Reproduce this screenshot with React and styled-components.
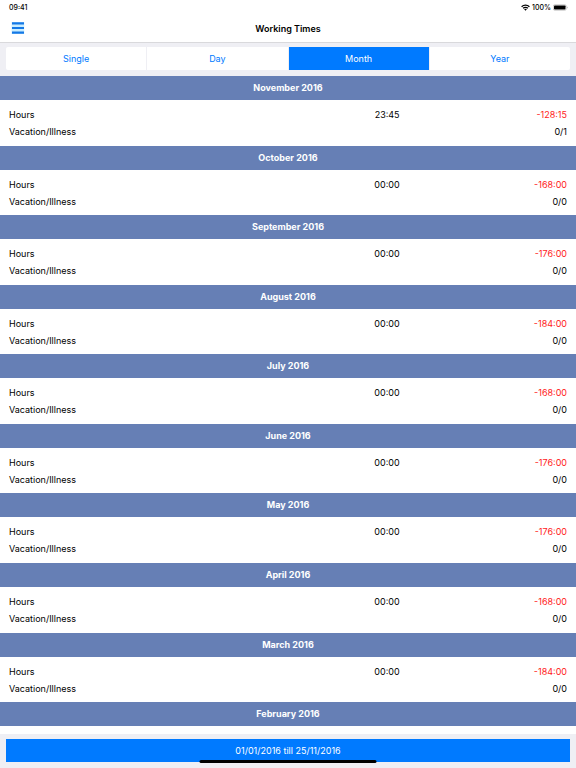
import React, { useState } from "react";
import styled, { createGlobalStyle } from "styled-components";

const tabs = ["Single", "Day", "Month", "Year"];

const months = [
  { title: "November 2016", hours: "23:45", balance: "-128:15", absence: "0/1" },
  { title: "October 2016", hours: "00:00", balance: "-168:00", absence: "0/0" },
  { title: "September 2016", hours: "00:00", balance: "-176:00", absence: "0/0" },
  { title: "August 2016", hours: "00:00", balance: "-184:00", absence: "0/0" },
  { title: "July 2016", hours: "00:00", balance: "-168:00", absence: "0/0" },
  { title: "June 2016", hours: "00:00", balance: "-176:00", absence: "0/0" },
  { title: "May 2016", hours: "00:00", balance: "-176:00", absence: "0/0" },
  { title: "April 2016", hours: "00:00", balance: "-168:00", absence: "0/0" },
  { title: "March 2016", hours: "00:00", balance: "-184:00", absence: "0/0" },
];

const WifiIcon = () => (
  <svg width="9" height="7" viewBox="0 0 18 14" aria-hidden="true">
    <g fill="none" stroke="#000" strokeWidth="2.6">
      <path d="M1.2 5.4a11 11 0 0 1 15.6 0" />
      <path d="M4.3 8.6a6.6 6.6 0 0 1 9.4 0" />
    </g>
    <path d="M9 13.6l-2.8-2.9a4 4 0 0 1 5.6 0z" />
  </svg>
);

const BatteryIcon = () => (
  <svg width="15" height="7" viewBox="0 0 30 14" aria-hidden="true">
    <rect x="0.5" y="1.5" width="26" height="11" rx="3" fill="none" stroke="#999" />
    <rect x="2" y="3" width="23" height="8" rx="1.5" />
    <path d="M28 5v4c1.6-.6 1.6-3.4 0-4z" fill="#999" />
  </svg>
);

const MenuIcon = () => (
  <svg width="14" height="14" viewBox="0 0 14 14" aria-hidden="true">
    <path fill="#c9edff" d="M.6 1h12.6v12H.6z" />
    <path fill="#1478e6" d="M1 1.2h12v2.2H1zM1 5.9h12v2.2H1zM1 10.5h12v2.2H1z" />
  </svg>
);

const Month = ({ title, hours, balance, absence }) => (
  <Section>
    <MonthTitle>{title}</MonthTitle>
    <Table>
      <tbody>
        <tr>
          <Label scope="row">Hours</Label>
          <Value>{hours}</Value>
          <Value $negative>{balance}</Value>
        </tr>
        <tr>
          <Label scope="row">Vacation/Illness</Label>
          <Value />
          <Value>{absence}</Value>
        </tr>
      </tbody>
    </Table>
  </Section>
);

const App = () => {
  const [active, setActive] = useState("Month");

  return (
    <Screen>
      <GlobalStyle />
      <StatusBar>
        <span>09:41</span>
        <Status>
          <WifiIcon />
          <span>100%</span>
          <BatteryIcon />
        </Status>
      </StatusBar>
      <NavBar>
        <MenuButton type="button" aria-label="Menu">
          <MenuIcon />
        </MenuButton>
        <Title>Working Times</Title>
      </NavBar>
      <TabBar>
        <Tabs>
          {tabs.map((tab) => (
            <Tab
              key={tab}
              type="button"
              aria-pressed={tab === active}
              $active={tab === active}
              onClick={() => setActive(tab)}
            >
              {tab}
            </Tab>
          ))}
        </Tabs>
      </TabBar>
      <List>
        {months.map((month) => (
          <Month key={month.title} {...month} />
        ))}
        <LastSection>
          <MonthTitle>February 2016</MonthTitle>
        </LastSection>
      </List>
      <Footer>
        <RangeButton type="button">01/01/2016 till 25/11/2016</RangeButton>
        <HomeIndicator />
      </Footer>
    </Screen>
  );
};

export default App;

const GlobalStyle = createGlobalStyle`
  * {
    box-sizing: border-box;
  }

  body {
    margin: 0;
    background: #fff;
    color: #000;
    font-family: Inter, "Liberation Sans", sans-serif;
    font-size: 9px;
  }

  button {
    margin: 0;
    padding: 0;
    border: 0;
    font: inherit;
    cursor: pointer;
  }
`;

const Screen = styled.div`
  display: flex;
  flex-direction: column;
  min-height: 100vh;
`;

const StatusBar = styled.div`
  display: flex;
  justify-content: space-between;
  align-items: center;
  height: 14px;
  padding: 0 8px 0 9px;
  font-size: 7px;
  font-weight: 500;
`;

const Status = styled.div`
  display: flex;
  align-items: center;
  gap: 2px;
`;

const NavBar = styled.header`
  display: grid;
  grid-template-columns: 1fr auto 1fr;
  align-items: center;
  height: 29px;
  padding: 0 11px;
  border-bottom: 1px solid #d9d9dc;
`;

const MenuButton = styled.button`
  display: flex;
  justify-self: start;
  background: none;
`;

const Title = styled.h1`
  margin: 0;
  font-size: 9px;
  font-weight: 600;
`;

const TabBar = styled.div`
  padding: 4px 6px 6px;
  background: #efeff4;
`;

const Tabs = styled.div`
  display: grid;
  grid-template-columns: repeat(4, 1fr);
  gap: 1px;
  border-radius: 2px;
  overflow: hidden;
`;

const Tab = styled.button`
  height: 23px;
  background: ${({ $active }) => ($active ? "#007aff" : "#fff")};
  color: ${({ $active }) => ($active ? "#fff" : "#007aff")};
`;

const List = styled.main`
  display: flex;
  flex: 1;
  flex-direction: column;
`;

const Section = styled.section`
  flex: 1;
`;

const LastSection = styled.section`
  flex: 0 0 32px;
`;

const MonthTitle = styled.h2`
  margin: 0;
  background: #667fb5;
  color: #fff;
  font-size: 9px;
  font-weight: 700;
  line-height: 24px;
  text-align: center;
`;

const Table = styled.table`
  width: 100%;
  padding: 6px 9px 5px;
  border-spacing: 0;
  table-layout: fixed;
  line-height: 17px;
`;

const Label = styled.th`
  width: 35%;
  padding: 0;
  font-weight: 400;
  text-align: left;
`;

const Value = styled.td`
  width: 35%;
  padding: 0;
  color: ${({ $negative }) => ($negative ? "#ff1a1a" : "inherit")};
  text-align: right;

  &:last-child {
    width: 30%;
  }
`;

const Footer = styled.footer`
  position: relative;
  padding: 5px 6px 6px;
  background: #efeff4;
`;

const RangeButton = styled.button`
  display: block;
  width: 100%;
  height: 23px;
  background: #007aff;
  color: #fff;
`;

const HomeIndicator = styled.div`
  position: absolute;
  bottom: 5px;
  left: 50%;
  width: 177px;
  height: 3px;
  border-radius: 2px;
  background: #000;
  transform: translateX(-50%);
`;
